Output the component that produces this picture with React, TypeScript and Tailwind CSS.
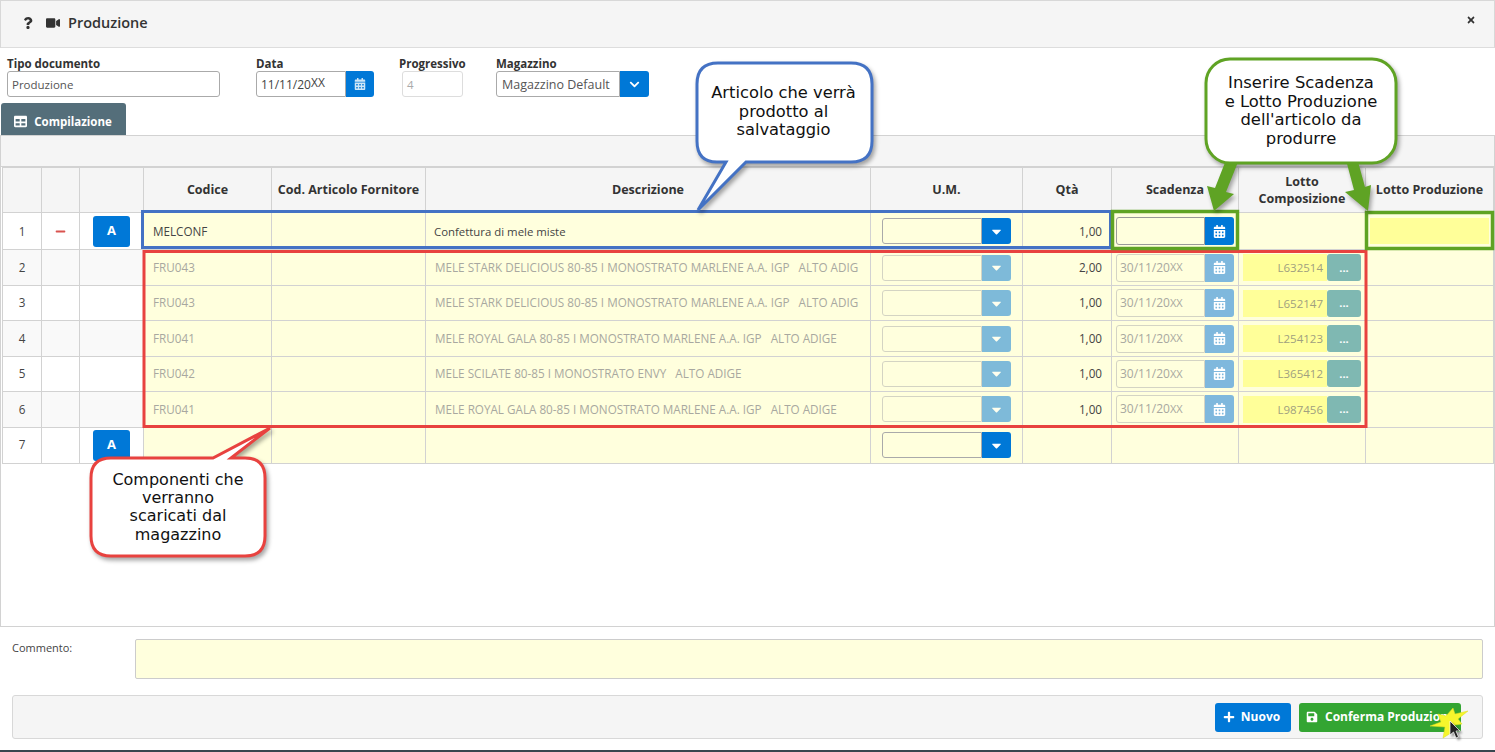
import { FaCalendarAlt, FaCaretDown, FaChevronDown, FaMinus, FaPlus, FaQuestion, FaSave, FaTable, FaTimes, FaVideo } from "react-icons/fa";

type Row = { n: number; codice: string; descr: string; qta: string; lotto: string };

const rows: Row[] = [
  { n: 2, codice: "FRU043", descr: "MELE STARK DELICIOUS 80-85 I MONOSTRATO MARLENE A.A. IGP\u00a0\u00a0\u00a0ALTO ADIG", qta: "2,00", lotto: "L632514" },
  { n: 3, codice: "FRU043", descr: "MELE STARK DELICIOUS 80-85 I MONOSTRATO MARLENE A.A. IGP\u00a0\u00a0\u00a0ALTO ADIG", qta: "1,00", lotto: "L652147" },
  { n: 4, codice: "FRU041", descr: "MELE ROYAL GALA 80-85 I MONOSTRATO MARLENE A.A. IGP\u00a0\u00a0\u00a0ALTO ADIGE", qta: "1,00", lotto: "L254123" },
  { n: 5, codice: "FRU042", descr: "MELE SCILATE 80-85 I MONOSTRATO ENVY\u00a0\u00a0\u00a0ALTO ADIGE", qta: "1,00", lotto: "L365412" },
  { n: 6, codice: "FRU041", descr: "MELE ROYAL GALA 80-85 I MONOSTRATO MARLENE A.A. IGP\u00a0\u00a0\u00a0ALTO ADIGE", qta: "1,00", lotto: "L987456" },
];

const widths = [39, 38, 64, 128, 154, 445, 152, 89, 127, 127, 128];
const td = "border border-[#d2d2d2] p-0 align-middle";
const yellow = "bg-[#ffffdd]";

function AButton() {
  return (
    <button className="mx-auto flex h-[31px] w-[37px] items-center justify-center rounded-[3px] bg-[#0078d7] text-[13px] font-bold text-white">
      A
    </button>
  );
}

function UmSelect({ disabled }: { disabled?: boolean }) {
  return (
    <div className={`mx-auto flex h-[26px] w-[129px] ${disabled ? "opacity-50" : ""}`}>
      <div className="flex-1 rounded-l-[3px] border border-[#aaa] bg-[#ffffdd]" />
      <div className="flex w-[29px] items-center justify-center rounded-r-[3px] bg-[#0078d7] text-white">
        <FaCaretDown size={15} />
      </div>
    </div>
  );
}

function DateCell({ value }: { value?: string }) {
  const disabled = !!value;
  return (
    <div className="mx-auto flex h-[28px] w-[118px]">
      <div className={`flex flex-1 items-center rounded-l-[3px] border bg-[#ffffdd] pl-[3px] text-[12px] ${disabled ? "border-[#d4d4c4] text-[#a8a8a0]" : "border-[#999]"}`}>
        {value && (
          <>
            30/11/20<span className="text-[11px]">XX</span>
          </>
        )}
      </div>
      <div className={`flex w-[29px] items-center justify-center rounded-r-[3px] text-white ${disabled ? "bg-[#7fb8dd]" : "bg-[#0078d7]"}`}>
        <FaCalendarAlt size={13} />
      </div>
    </div>
  );
}

function LottoCell({ value }: { value: string }) {
  return (
    <div className="mx-auto flex h-[27px] w-[118px]">
      <div className="flex flex-1 items-center justify-end bg-[#ffff99] pr-[4px] text-[11.5px] text-[#a0a080]">{value}</div>
      <div className="flex w-[34px] items-center justify-center rounded-[3px] bg-[#7fb8b2] pb-[1px] text-[11px] font-bold leading-none text-white">...</div>
    </div>
  );
}

function Table() {
  return (
    <table className="ml-px table-fixed border-collapse text-[11.7px]" style={{ width: 1491 }}>
      <colgroup>
        {widths.map((w, i) => (
          <col key={i} style={{ width: w }} />
        ))}
      </colgroup>
      <thead>
        <tr className="h-[45px] bg-[#f5f5f5] text-center text-[12.5px] font-bold text-[#333]">
          <th className={td} />
          <th className={td} />
          <th className={td} />
          <th className={td}>Codice</th>
          <th className={td}>Cod. Articolo Fornitore</th>
          <th className={td}>Descrizione</th>
          <th className={td}>U.M.</th>
          <th className={td}>Qtà</th>
          <th className={td}>Scadenza</th>
          <th className={`${td} leading-[17px]`}>
            Lotto
            <br />
            Composizione
          </th>
          <th className={td}>Lotto Produzione</th>
        </tr>
      </thead>
      <tbody className="text-[#444]">
        <tr className="h-[37px]">
          <td className={`${td} pt-px text-center`}>1</td>
          <td className={td}>
            <FaMinus size={11} className="mx-auto text-[#d9534f]" />
          </td>
          <td className={td}>
            <AButton />
          </td>
          <td className={`${td} ${yellow} pl-[9px] pt-px`}>MELCONF</td>
          <td className={`${td} ${yellow}`} />
          <td className={`${td} ${yellow} pl-[8px] pt-px text-[11.4px]`}>Confettura di mele miste</td>
          <td className={`${td} ${yellow}`}>
            <UmSelect />
          </td>
          <td className={`${td} ${yellow} pr-[9px] pt-px text-right`}>1,00</td>
          <td className={`${td} ${yellow}`}>
            <DateCell />
          </td>
          <td className={`${td} ${yellow}`} />
          <td className={`${td} ${yellow}`}>
            <div className="mx-auto h-[26px] w-[119px] bg-[#ffff99]" />
          </td>
        </tr>
        {rows.map((r) => (
          <tr key={r.n} className={r.n === 2 ? "h-[36px]" : "h-[35.4px]"}>
            <td className={`${td} text-center ${r.n % 2 === 0 ? "bg-[#f9f9f9]" : ""}`}>{r.n}</td>
            <td className={`${td} ${r.n % 2 === 0 ? "bg-[#f9f9f9]" : ""}`} />
            <td className={`${td} ${r.n % 2 === 0 ? "bg-[#f9f9f9]" : ""}`} />
            <td className={`${td} ${yellow} pl-[9px] text-[#a8a8a0]`}>{r.codice}</td>
            <td className={`${td} ${yellow}`} />
            <td className={`${td} ${yellow} overflow-hidden whitespace-nowrap pl-[9px] text-[#a8a8a0]`}>{r.descr}</td>
            <td className={`${td} ${yellow}`}>
              <UmSelect disabled />
            </td>
            <td className={`${td} ${yellow} pr-[9px] text-right`}>{r.qta}</td>
            <td className={`${td} ${yellow}`}>
              <DateCell value="30/11/20XX" />
            </td>
            <td className={`${td} ${yellow}`}>
              <LottoCell value={r.lotto} />
            </td>
            <td className={`${td} ${yellow}`} />
          </tr>
        ))}
        <tr className="h-[36px]">
          <td className={`${td} text-center`}>7</td>
          <td className={td} />
          <td className={td}>
            <AButton />
          </td>
          <td className={`${td} ${yellow}`} />
          <td className={`${td} ${yellow}`} />
          <td className={`${td} ${yellow}`} />
          <td className={`${td} ${yellow}`}>
            <UmSelect />
          </td>
          <td className={`${td} ${yellow}`} />
          <td className={`${td} ${yellow}`} />
          <td className={`${td} ${yellow}`} />
          <td className={`${td} ${yellow}`} />
        </tr>
      </tbody>
    </table>
  );
}

// annotations drawn on top of the screenshot
function Overlay() {
  return (
    <>
      <svg className="pointer-events-none absolute inset-0" width={1495} height={752}>
        <rect x="142.5" y="211.5" width="968" height="36" fill="none" stroke="#4472c4" strokeWidth="3" />
        <rect x="144" y="251.5" width="1222" height="175" fill="none" stroke="#e8423f" strokeWidth="3" />
        <rect x="1112.5" y="211.5" width="125" height="37" fill="none" stroke="#5fa324" strokeWidth="3.5" />
        <rect x="1366.5" y="212.5" width="126" height="36" fill="none" stroke="#5fa324" strokeWidth="3.5" />

        <g className="drop-shadow-[2px_3px_2px_rgba(0,0,0,0.35)]">
          <path
            d="M718 63 H851 Q872 63 872 84 V141 Q872 162 851 162 H746 L698 210 L726 162 H717 Q697 162 697 141 V84 Q697 63 718 63 Z"
            fill="#fff"
            stroke="#4472c4"
            strokeWidth="3"
          />
          <path
            d="M111 458 H213 L270 428 L231 458 H245 Q265 458 265 478 V536 Q265 556 245 556 H111 Q91 556 91 536 V478 Q91 458 111 458 Z"
            fill="#fff"
            stroke="#e8423f"
            strokeWidth="3"
          />
          <path d="M1226 160 L1238 162 L1226 192 L1234 194 L1214 211 L1207 186 L1215 188 Z" fill="#5fa324" />
          <path d="M1346 160 L1357 158 L1365 187 L1371 185 L1368 211 L1345 192 L1354 190 Z" fill="#5fa324" />
          <rect x="1206" y="59" width="190" height="104" rx="24" fill="#fff" stroke="#5fa324" strokeWidth="3" />
        </g>

        <path
          d="M1453 708 L1455 714 L1468 711 L1458 719 L1462 724 L1455 725 L1451 733 L1443 738 L1445 727 L1430 726 L1441 722 L1438 714 L1446 716 Z"
          fill="#f6f62c"
          stroke="#dcdc20"
          strokeWidth="0.5"
        />
        <path
          d="M1450 721 V735 L1453.5 732 L1456 738 L1458.5 737 L1456 731 L1460 731 Z"
          fill="#222"
          stroke="#fff"
          strokeWidth="0.7"
          className="drop-shadow-[2px_2px_1px_rgba(0,0,0,0.4)]"
        />
      </svg>

      <div className="absolute left-[696px] top-[84px] w-[175px] text-center font-['DejaVu_Sans',sans-serif] text-[16.3px] leading-[18.5px] text-[#111]">
        Articolo che verrà
        <br />
        prodotto al
        <br />
        salvataggio
      </div>
      <div className="absolute left-[1206px] top-[74px] w-[190px] text-center font-['DejaVu_Sans',sans-serif] text-[16.4px] leading-[18.5px] text-[#111]">
        Inserire Scadenza
        <br />
        e Lotto Produzione
        <br />
        dell'articolo da
        <br />
        produrre
      </div>
      <div className="absolute left-[91px] top-[471px] w-[174px] text-center font-['DejaVu_Sans',sans-serif] text-[16px] leading-[18.2px] text-[#111]">
        Componenti che
        <br />
        verranno
        <br />
        scaricati dal
        <br />
        magazzino
      </div>
    </>
  );
}

export default function App() {
  return (
    <div className="relative flex h-[752px] w-[1495px] flex-col overflow-hidden bg-white font-['Open_Sans',sans-serif] text-[11.5px] text-[#333]">
      <header className="flex h-[48px] shrink-0 items-center border border-b-[#ddd] border-[#d8d8d8] bg-[#f5f5f5] pb-[3px] pl-[21px] pr-[18px]">
        <FaQuestion size={12} className="text-[#333]" />
        <FaVideo size={14} className="ml-[12px] text-[#333]" />
        <span className="ml-[8px] text-[14.5px] font-semibold text-[#333]">Produzione</span>
        <FaTimes size={10} className="mb-[6px] ml-auto text-[#333]" />
      </header>

      <div className="flex h-[49px] shrink-0 items-end pl-[7px]">
        <label className="w-[213px]">
          <span className="block font-bold leading-[14px]">Tipo documento</span>
          <span className="flex h-[26px] items-center rounded-[3px] border border-[#aaa] pl-[4px] pt-px text-[#555]">Produzione</span>
        </label>
        <label className="ml-[36px] w-[118px]">
          <span className="block font-bold leading-[14px]">Data</span>
          <span className="flex h-[26px]">
            <span className="flex flex-1 items-center rounded-l-[3px] border border-[#aaa] pl-[4px] pt-px text-[12px] text-[#444]">
              11/11/20<span className="mb-[3px] text-[12px]">XX</span>
            </span>
            <span className="flex w-[28px] items-center justify-center rounded-r-[3px] bg-[#0078d7] text-white">
              <FaCalendarAlt size={12} className="text-[#cfe6f7]" />
            </span>
          </span>
        </label>
        <label className="ml-[25px] w-[64px]">
          <span className="block font-bold leading-[14px]">Progressivo</span>
          <span className="ml-[3px] flex h-[26px] w-[61px] items-center rounded-[3px] border border-[#ddd] pl-[4px] pt-px text-[#aaa]">4</span>
        </label>
        <label className="ml-[33px] w-[153px]">
          <span className="block font-bold leading-[14px]">Magazzino</span>
          <span className="flex h-[26px]">
            <span className="flex flex-1 items-center rounded-l-[3px] border border-[#aaa] pl-[5px] pt-[2px] text-[12.5px] text-[#555]">Magazzino Default</span>
            <span className="flex w-[29px] items-center justify-center rounded-r-[3px] bg-[#0078d7] text-white">
              <FaChevronDown size={11} />
            </span>
          </span>
        </label>
      </div>

      <div className="mt-[6px] flex h-[32px] shrink-0 pl-px">
        <div className="flex w-[125px] items-center justify-center gap-[7px] rounded-t-[3px] bg-[#546e7a] pr-[1px] pt-[5px] font-bold text-white">
          <FaTable size={13} />
          Compilazione
        </div>
      </div>

      <main className="h-[492px] shrink-0 border border-[#d2d2d2]">
        <div className="h-[31px] border-b border-[#d2d2d2] bg-[#f5f5f5]" />
        <Table />
      </main>

      <div className="mt-[12px] flex h-[40px] shrink-0 pl-[12px] pr-[12px]">
        <span className="w-[123px] text-[11px] leading-[18px] text-[#444]">Commento:</span>
        <div className="flex-1 rounded-[2px] border border-[#ccc] bg-[#ffffdd]" />
      </div>

      <footer className="mx-[12px] mt-[16px] flex h-[44px] shrink-0 items-center justify-end gap-[8px] rounded-[3px] border border-[#d8d8d8] bg-[#f5f5f5] pr-[21px] text-[12px]">
        <button className="flex h-[29px] w-[76px] items-center justify-center gap-[6px] rounded-[3px] bg-[#0078d7] pr-[3px] font-bold text-white">
          <FaPlus size={12} />
          Nuovo
        </button>
        <button className="flex h-[29px] w-[162px] items-center gap-[7px] overflow-hidden whitespace-nowrap rounded-[3px] bg-[#33a532] pl-[7px] font-bold text-white">
          <FaSave size={12} />
          Conferma Produzione
        </button>
      </footer>

      <div className="mt-auto h-[2px] bg-[#37474f]" />
      <Overlay />
    </div>
  );
}
